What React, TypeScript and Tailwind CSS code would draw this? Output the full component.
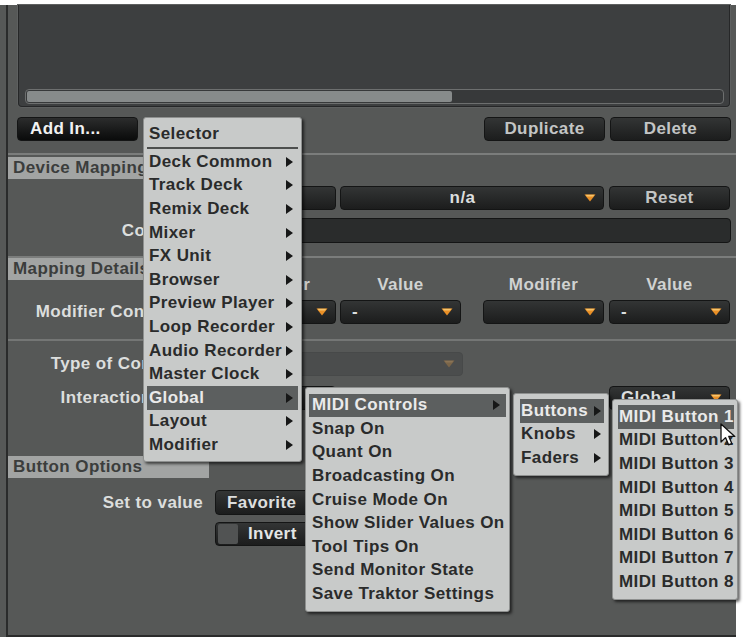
import React from 'react';

// Traktor controller manager, with the "Add In..." cascade open
const FONT = "font-['Liberation_Sans',Arial,sans-serif]";

function DownArrow({ dim = false }: { dim?: boolean }) {
  return (
    <svg width="12" height="8" viewBox="0 0 12 8" className="shrink-0">
      <path d="M0.5 0.5 H11.5 L6 7.5 Z" fill={dim ? '#7a6549' : '#e98f26'} />
      <path d="M1.5 0.8 H10.5 L9 2.6 H3 Z" fill={dim ? '#8a7456' : '#f8c46a'} />
    </svg>
  );
}

function SubArrow() {
  return (
    <svg width="7" height="10" viewBox="0 0 7 10" className="shrink-0">
      <path d="M0 0 L7 5 L0 10 Z" fill="#161717" />
    </svg>
  );
}

function Drop({ className = '', text = '', dim = false, center = false }: { className?: string; text?: string; dim?: boolean; center?: boolean }) {
  return (
    <div
      className={`h-full flex items-center rounded-[4px] border shrink-0 ${
        dim ? 'border-[#474949] bg-[#4b4d4d]' : 'border-[#141515] bg-linear-to-b from-[#333535] to-[#1c1d1d]'
      } ${className}`}
    >
      <span className={`flex-1 whitespace-nowrap text-[#dcdede] ${center ? 'text-center' : 'pl-[11px]'}`}>{text}</span>
      <span className="mr-[7px] flex">
        <DownArrow dim={dim} />
      </span>
    </div>
  );
}

function Btn({ className = '', children }: { className?: string; children?: React.ReactNode }) {
  return (
    <div
      className={`h-full w-[121px] flex items-center justify-center rounded-[4px] border border-[#141515] bg-linear-to-b from-[#333535] to-[#1c1d1d] text-[#c3c5c5] shrink-0 ${className}`}
    >
      {children}
    </div>
  );
}

function Header({ children, className = '' }: { children: React.ReactNode; className?: string }) {
  return (
    <div className={`w-[201px] h-[22px] shrink-0 bg-[#a2a4a3] text-[#3b3d3c] pl-[5px] flex items-center whitespace-nowrap overflow-hidden ${className}`}>
      {children}
    </div>
  );
}

function Row({ label = '', className = '', h = 'h-[24px]', children }: { label?: string; className?: string; h?: string; children: React.ReactNode }) {
  return (
    <div className={`flex shrink-0 ${h} ${className}`}>
      <div className="w-[195px] flex items-center justify-end text-[#dcdedd] whitespace-nowrap">{label}</div>
      <div className="ml-[12px] flex h-full">{children}</div>
    </div>
  );
}

type Item = { label: string; sub?: boolean; active?: boolean };

function MenuItem({ item, pl, pr }: { item: Item; pl: string; pr: string }) {
  return (
    <div
      className={`h-[23.6px] flex items-center whitespace-nowrap ${pl} ${pr} ${
        item.active ? 'bg-[#5c5f5f] text-[#eaeaea]' : 'text-[#2a2b2b]'
      }`}
    >
      <span>{item.label}</span>
      {item.sub && (
        <span className="ml-auto flex">
          <SubArrow />
        </span>
      )}
    </div>
  );
}

const selector: Item[] = [
  { label: 'Deck Common', sub: true },
  { label: 'Track Deck', sub: true },
  { label: 'Remix Deck', sub: true },
  { label: 'Mixer', sub: true },
  { label: 'FX Unit', sub: true },
  { label: 'Browser', sub: true },
  { label: 'Preview Player', sub: true },
  { label: 'Loop Recorder', sub: true },
  { label: 'Audio Recorder', sub: true },
  { label: 'Master Clock', sub: true },
  { label: 'Global', sub: true, active: true },
  { label: 'Layout', sub: true },
  { label: 'Modifier', sub: true },
];

const globalItems: Item[] = [
  { label: 'MIDI Controls', sub: true, active: true },
  { label: 'Snap On' },
  { label: 'Quant On' },
  { label: 'Broadcasting On' },
  { label: 'Cruise Mode On' },
  { label: 'Show Slider Values On' },
  { label: 'Tool Tips On' },
  { label: 'Send Monitor State' },
  { label: 'Save Traktor Settings' },
];

const midiItems: Item[] = [
  { label: 'Buttons', sub: true, active: true },
  { label: 'Knobs', sub: true },
  { label: 'Faders', sub: true },
];

const buttonItems: Item[] = Array.from({ length: 8 }, (_, i) => ({ label: `MIDI Button ${i + 1}`, active: i === 0 }));

const menuBox = 'absolute bg-[#c8cac9] border border-[#8e908f] rounded-[3px] shadow-[2px_2px_3px_rgba(0,0,0,0.6)] flex flex-col';

export default function App() {
  return (
    <div className={`w-[743px] h-[637px] bg-white relative overflow-hidden ${FONT} font-bold text-[17px] leading-[20px] tracking-[0.4px]`}>
      <div className="mt-[5px] w-[736px] h-[632px] bg-[#565857] pl-[6px]">
        <div className="h-full border-l-2 border-b-2 border-[#2a2b2b] flex flex-col">
          {/* mapping list */}
          <div className="ml-[10px] w-[712px] h-[102px] shrink-0 bg-[#3d3f40] border border-t-0 border-[#262728] shadow-[0_0_0_1px_#5e6060] rounded-b-[4px] flex flex-col justify-end pb-[2px]">
            <div className="ml-[6px] w-[699px] h-[15px] rounded-[4px] border border-[#6d6f6f] bg-[#37393a] p-[1px]">
              <div className="w-[425px] h-full rounded-[2px] bg-[#878b8b]" />
            </div>
          </div>

          <div className="mt-[10px] h-[24px] flex shrink-0">
            <Btn className="ml-[9px] justify-start! pl-[12px] from-[#2c2d2d]! to-[#0a0b0b]! text-[#f2f2f2]!">Add In...</Btn>
            <Btn className="ml-[346px]">Duplicate</Btn>
            <Btn className="ml-[5px]">Delete</Btn>
          </div>

          <div className="mt-[12px] h-[2px] bg-[#7b7d7c] shrink-0" />

          {/* Device Mapping */}
          <Header className="mt-[2px]">Device Mapping</Header>
          <Row className="mt-[7px]">
            <Btn />
            <Drop className="ml-[4px] w-[264px]" text="n/a" center />
            <Btn className="ml-[5px]">Reset</Btn>
          </Row>
          <Row className="mt-[8px]" h="h-[25px]" label="Comment">
            <div className="w-[516px] h-full rounded-[4px] border border-[#141515] bg-[#2a2c2c]" />
          </Row>

          <div className="mt-[13px] h-[2px] bg-[#7b7d7c] shrink-0" />

          {/* Mapping Details */}
          <div className="flex h-[36px] shrink-0">
            <Header className="self-start">Mapping Details</Header>
            <div className="ml-[6px] self-end flex text-[#d0d2d1] leading-[18px]">
              <div className="w-[121px] text-center">Modifier</div>
              <div className="ml-[4px] w-[121px] text-center">Value</div>
              <div className="ml-[22px] w-[121px] text-center">Modifier</div>
              <div className="ml-[5px] w-[121px] text-center">Value</div>
            </div>
          </div>
          <Row className="mt-[6px]" label="Modifier Conditions">
            <Drop className="w-[121px]" />
            <Drop className="ml-[4px] w-[121px]" text="-" />
            <Drop className="ml-[22px] w-[121px]" />
            <Drop className="ml-[5px] w-[121px]" text="-" />
          </Row>

          <div className="mt-[15px] h-[2px] bg-[#747675] shrink-0" />

          <Row className="mt-[11px]" label="Type of Controller">
            <Drop className="w-[248px]" dim />
          </Row>
          <Row className="mt-[10px]" label="Interaction Mode">
            <Drop className="w-[121px]" />
            <div className="w-[264px]" />
            <Drop className="ml-[9px] w-[121px]" text="Global" />
          </Row>

          {/* Button Options */}
          <Header className="mt-[46px]">Button Options</Header>
          <Row className="mt-[12px]" h="h-[25px]" label="Set to value">
            <Drop className="w-[121px]" text="Favorite" />
          </Row>
          <Row className="mt-[7px]" label="">
            <div className="w-[121px] h-full flex items-center rounded-[4px] border border-[#141515] bg-linear-to-b from-[#333535] to-[#1c1d1d]">
              <div className="ml-[2px] w-[20px] h-[20px] rounded-[2px] bg-[#515353]" />
              <span className="ml-[10px] text-[#e4e6e6]">Invert</span>
            </div>
          </Row>
        </div>
      </div>

      {/* Selector menu */}
      <div className={`${menuBox} left-[143px] top-[117px] w-[159px] h-[345px] pt-[4px] px-[3px]`}>
        <div className="h-[24px] flex items-center pl-[2px] text-[#2a2b2b]">Selector</div>
        <div className="mt-[1px] h-[2px] bg-[#4d4f4e]" />
        <div className="mt-[1px]">
          {selector.map((it) => (
            <MenuItem key={it.label} item={it} pl="pl-[2px]" pr="pr-[5px]" />
          ))}
        </div>
      </div>

      {/* Global submenu */}
      <div className={`${menuBox} left-[305px] top-[387px] w-[205px] h-[225px] pt-[5.5px] px-[3px]`}>
        {globalItems.map((it) => (
          <MenuItem key={it.label} item={it} pl="pl-[3px]" pr="pr-[6px]" />
        ))}
      </div>

      {/* MIDI Controls submenu */}
      <div className={`${menuBox} left-[513px] top-[393px] w-[96px] h-[83px] pt-[5px] pl-[6px] pr-[4px]`}>
        {midiItems.map((it) => (
          <MenuItem key={it.label} item={it} pl="pl-[1px]" pr="pr-[3px]" />
        ))}
      </div>

      {/* Buttons submenu */}
      <div className={`${menuBox} left-[612px] top-[399px] w-[126px] h-[201px] pt-[5px] pl-[5px] pr-[3px]`}>
        {buttonItems.map((it) => (
          <MenuItem key={it.label} item={it} pl="pl-[1px]" pr="pr-[1px]" />
        ))}
      </div>

      {/* mouse pointer */}
      <svg className="absolute left-[720px] top-[423px]" width="18" height="25" viewBox="0 0 18 25">
        <path
          d="M1 1 L1 19 L5.5 14.6 L8.6 21.8 L11.8 20.4 L8.8 13.4 L14.8 13.4 Z"
          fill="#ffffff"
          stroke="#111111"
          strokeWidth="1.3"
          strokeLinejoin="round"
        />
      </svg>
    </div>
  );
}
